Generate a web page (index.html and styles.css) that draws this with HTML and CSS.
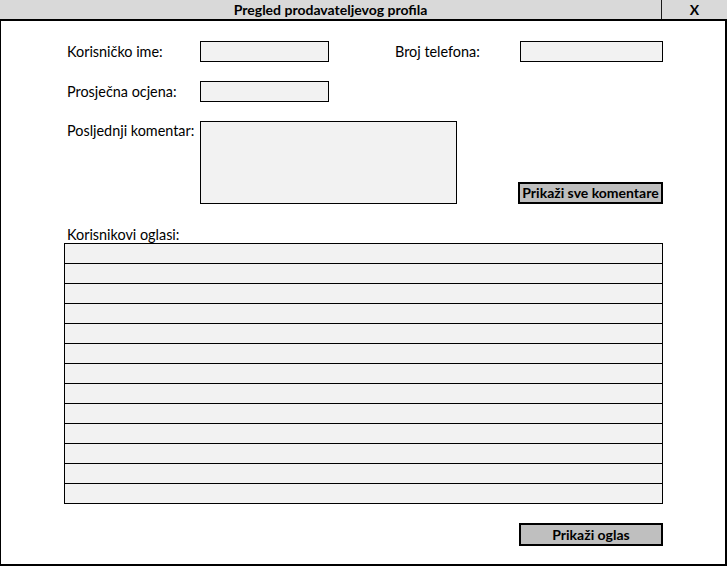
FILE: index.html
```html
<!DOCTYPE html>
<html lang="hr">
<head>
<meta charset="utf-8">
<title>Pregled prodavateljevog profila</title>
<link rel="stylesheet" href="styles.css">
</head>
<body>
<div class="window">
  <div class="titlebar">
    <div class="title">Pregled prodavateljevog profila</div>
    <div class="close">X</div>
  </div>
  <div class="content">
    <div class="row row1">
      <div class="label">Korisničko ime:</div>
      <div class="field small"></div>
      <div class="label label-phone">Broj telefona:</div>
      <div class="field phone"></div>
    </div>
    <div class="row row2">
      <div class="label">Prosječna ocjena:</div>
      <div class="field small"></div>
    </div>
    <div class="row row3">
      <div class="label label-top">Posljednji komentar:</div>
      <div class="field comment"></div>
      <div class="button btn-comments">Prikaži sve komentare</div>
    </div>
    <div class="label ads-label">Korisnikovi oglasi:</div>
    <div class="ads">
      <div class="ad"></div><div class="ad"></div><div class="ad"></div>
      <div class="ad"></div><div class="ad"></div><div class="ad"></div>
      <div class="ad"></div><div class="ad"></div><div class="ad"></div>
      <div class="ad"></div><div class="ad"></div><div class="ad"></div>
      <div class="ad"></div>
    </div>
    <div class="footer">
      <div class="button btn-ad">Prikaži oglas</div>
    </div>
  </div>
</div>
</body>
</html>
```
FILE: styles.css
```css
html, body {
  margin: 0;
  padding: 0;
  background: #fff;
}
body {
  font-family: Lato, "Open Sans", "Liberation Sans", sans-serif;
  font-size: 14.4px;
  color: #000;
}
.window {
  width: 727px;
  height: 566px;
  display: flex;
  flex-direction: column;
}
.titlebar {
  display: flex;
  height: 21px;
  box-sizing: border-box;
  background: #d9d9d9;
  border-bottom: 2px solid #000;
  font-weight: bold;
  font-size: 14px;
}
.title {
  width: 661px;
  border-right: 1px solid #1a1a1a;
  text-align: center;
  line-height: 19px;
}
.close {
  flex: 1;
  text-align: center;
  line-height: 19px;
}
.content {
  flex: 1;
  border-left: 1px solid #000;
  border-right: 2px solid #000;
  border-bottom: 2px solid #000;
  padding-left: 66px;
}
.row {
  display: flex;
}
.row1 {
  margin-top: 20px;
  height: 21px;
  align-items: center;
}
.row2 {
  margin-top: 19px;
  height: 21px;
  align-items: center;
}
.row3 {
  margin-top: 19px;
  align-items: flex-end;
}
.label {
  width: 133px;
  line-height: 20px;
}
.label-phone {
  margin-left: 66px;
  width: 125px;
}
.label-top {
  align-self: flex-start;
}
.field {
  box-sizing: border-box;
  background: #f2f2f2;
  border: 1px solid #000;
}
.small {
  width: 129px;
  height: 21px;
}
.phone {
  width: 143px;
  height: 21px;
}
.comment {
  width: 257px;
  height: 83px;
}
.button {
  box-sizing: border-box;
  background: #bfbfbf;
  border: 2px solid #000;
  font-weight: bold;
  font-size: 14px;
  text-align: center;
}
.btn-comments {
  margin-left: 61px;
  width: 145px;
  height: 22px;
  line-height: 18px;
}
.ads-label {
  margin-top: 22px;
  line-height: 17px;
  height: 17px;
}
.ads {
  margin-left: -3px;
  width: 599px;
  box-sizing: border-box;
  border: 1px solid #000;
  border-top: none;
}
.ad {
  height: 20px;
  box-sizing: border-box;
  border-top: 1px solid #000;
  background: #f2f2f2;
}
.footer {
  display: flex;
  margin-top: 19px;
  padding-left: 452px;
}
.btn-ad {
  width: 144px;
  height: 23px;
  line-height: 19px;
}
```
